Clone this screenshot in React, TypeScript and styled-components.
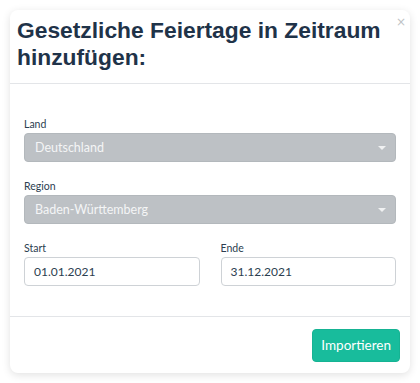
import React from 'react'
import styled, {createGlobalStyle} from 'styled-components'

const GlobalStyle = createGlobalStyle`
  html, body {
    margin: 0;
    padding: 0;
    background: #ffffff;
  }
  * {
    box-sizing: border-box;
  }
`;

const Page = styled.div`
  width: 420px;
  height: 383px;
  padding: 10px;
  background: #ffffff;
`;

const Modal = styled.div`
  width: 400px;
  height: 363px;
  background: #ffffff;
  border-radius: 8px;
  box-shadow: 0 2px 8px rgba(0, 0, 0, 0.12);
  display: flex;
  flex-direction: column;
`;

const Header = styled.div`
  position: relative;
  height: 74px;
  padding: 7px 16px 0 7px;
  border-bottom: 1px solid #e3e5e8;
`;

const Title = styled.h2`
  margin: 0;
  font-family: "Liberation Sans", Arial, sans-serif;
  font-weight: 700;
  font-size: 22.8px;
  line-height: 27px;
  color: #1f3349;
`;

const Close = styled.span`
  position: absolute;
  top: 5px;
  right: 4px;
  font-family: "DejaVu Sans", sans-serif;
  font-size: 12px;
  color: #c0c3c6;
`;

const Body = styled.div`
  flex: 1;
  padding: 33px 14px 0 14px;
  display: flex;
  flex-direction: column;
  gap: 17px;
  border-bottom: 1px solid #e3e5e8;
`;

const Row = styled.div`
  display: flex;
  gap: 21px;
`;

const Field = styled.div<{ $grow?: boolean }>`
  flex: ${p => (p.$grow ? 1 : '0 0 auto')};
  display: flex;
  flex-direction: column;
  gap: 2px;
`;

const Label = styled.label`
  font-family: Lato, "Open Sans", sans-serif;
  font-size: 10.5px;
  line-height: 14px;
  color: #2c3e50;
`;

const Select = styled.div`
  height: 29px;
  padding: 0 10px;
  display: flex;
  align-items: center;
  justify-content: space-between;
  background: #bdc1c5;
  border: 1px solid #b3b8bc;
  border-radius: 4px;
  font-family: Lato, "Open Sans", sans-serif;
  font-size: 12.5px;
  color: #f4f5f6;
`;

const Caret = styled.span`
  width: 0;
  height: 0;
  border-left: 4px solid transparent;
  border-right: 4px solid transparent;
  border-top: 4px solid #f0f1f2;
  margin-right: -1px;
`;

const Input = styled.div`
  height: 29px;
  padding: 0 9px;
  display: flex;
  align-items: center;
  background: #ffffff;
  border: 1px solid #ced2d6;
  border-radius: 4px;
  font-family: Lato, "Open Sans", sans-serif;
  font-size: 12px;
  color: #2c3e50;
`;

const Footer = styled.div`
  height: 56px;
  padding: 0 10px 0 0;
  display: flex;
  align-items: center;
  justify-content: flex-end;
`;

const PrimaryButton = styled.button`
  height: 33px;
  padding: 0 8px;
  background: #18bc9c;
  border: 1px solid #16b393;
  border-radius: 4px;
  font-family: Lato, "Open Sans", sans-serif;
  font-size: 13.5px;
  color: #ffffff;
  cursor: pointer;
`;

export default function App() {
    return (
        <>
            <GlobalStyle/>
            <Page>
                <Modal>
                    <Header>
                        <Title>Gesetzliche Feiertage in Zeitraum hinzufügen:</Title>
                        <Close>×</Close>
                    </Header>
                    <Body>
                        <Field>
                            <Label>Land</Label>
                            <Select>Deutschland<Caret/></Select>
                        </Field>
                        <Field>
                            <Label>Region</Label>
                            <Select>Baden-Württemberg<Caret/></Select>
                        </Field>
                        <Row>
                            <Field $grow>
                                <Label>Start</Label>
                                <Input>01.01.2021</Input>
                            </Field>
                            <Field $grow>
                                <Label>Ende</Label>
                                <Input>31.12.2021</Input>
                            </Field>
                        </Row>
                    </Body>
                    <Footer>
                        <PrimaryButton>Importieren</PrimaryButton>
                    </Footer>
                </Modal>
            </Page>
        </>
    );
}
